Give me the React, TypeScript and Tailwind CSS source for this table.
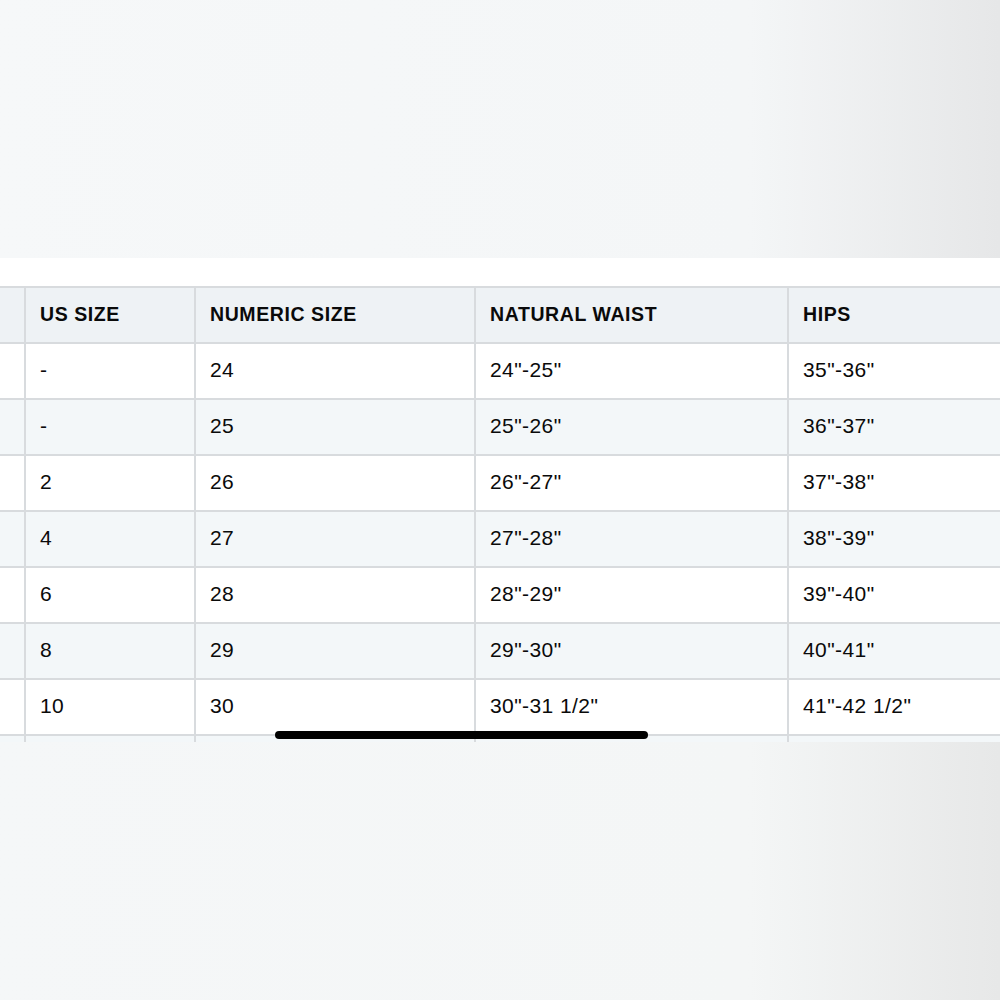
const headers = ["", "US SIZE", "NUMERIC SIZE", "NATURAL WAIST", "HIPS"];

const rows = [
  ["", "-", "24", "24\"-25\"", "35\"-36\""],
  ["", "-", "25", "25\"-26\"", "36\"-37\""],
  ["", "2", "26", "26\"-27\"", "37\"-38\""],
  ["", "4", "27", "27\"-28\"", "38\"-39\""],
  ["", "6", "28", "28\"-29\"", "39\"-40\""],
  ["", "8", "29", "29\"-30\"", "40\"-41\""],
  ["", "10", "30", "30\"-31 1/2\"", "41\"-42 1/2\""],
];

const cols = "grid grid-cols-[24px_170px_280px_313px_1fr]";

const App = () => {
  return (
    <div
      className="w-[1000px] h-[1000px] flex flex-col overflow-hidden"
      style={{ fontFamily: "'Liberation Sans', Arial, sans-serif" }}
    >
      <div className="h-[258px] bg-gradient-to-r from-[#f6f8f9] via-[#f4f6f7] via-75% to-[#e6e7e8]" />

      <div className="relative bg-white pt-[28px]">
        <div className={`${cols} h-[56px] bg-[#eef2f5] border-t-2 border-[#d8dbde]`}>
          {headers.map((h, i) => (
            <div
              key={i}
              className={`flex items-center text-[19.5px] font-bold tracking-[0.03em] text-[#0a0a0a] ${
                i > 0 ? "border-l-2 border-[#d8dbde] pl-[14px]" : ""
              }`}
            >
              {h}
            </div>
          ))}
        </div>

        {rows.map((r, ri) => (
          <div
            key={ri}
            className={`${cols} h-[56px] border-t-2 border-[#d8dbde] ${
              ri % 2 === 1 ? "bg-[#f3f7f9]" : "bg-white"
            }`}
          >
            {r.map((c, ci) => (
              <div
                key={ci}
                className={`flex items-center pb-[2px] text-[21px] tracking-[0.02em] text-[#0a0a0a] ${
                  ci > 0 ? "border-l-2 border-[#d8dbde] pl-[14px]" : ""
                }`}
              >
                {c}
              </div>
            ))}
          </div>
        ))}

        <div className={`${cols} h-[8px] border-t-2 border-[#d8dbde] bg-[#f3f7f9]`}>
          {headers.map((_, ci) => (
            <div key={ci} className={ci > 0 ? "border-l-2 border-[#d8dbde]" : ""} />
          ))}
        </div>

        <div className="absolute left-[275px] bottom-[3px] w-[373px] h-[8px] rounded-full bg-black" />
      </div>

      <div className="flex-1 bg-gradient-to-r from-[#f5f7f8] via-[#f4f6f6] via-75% to-[#e7e8e8]" />
    </div>
  );
};

export default App;
